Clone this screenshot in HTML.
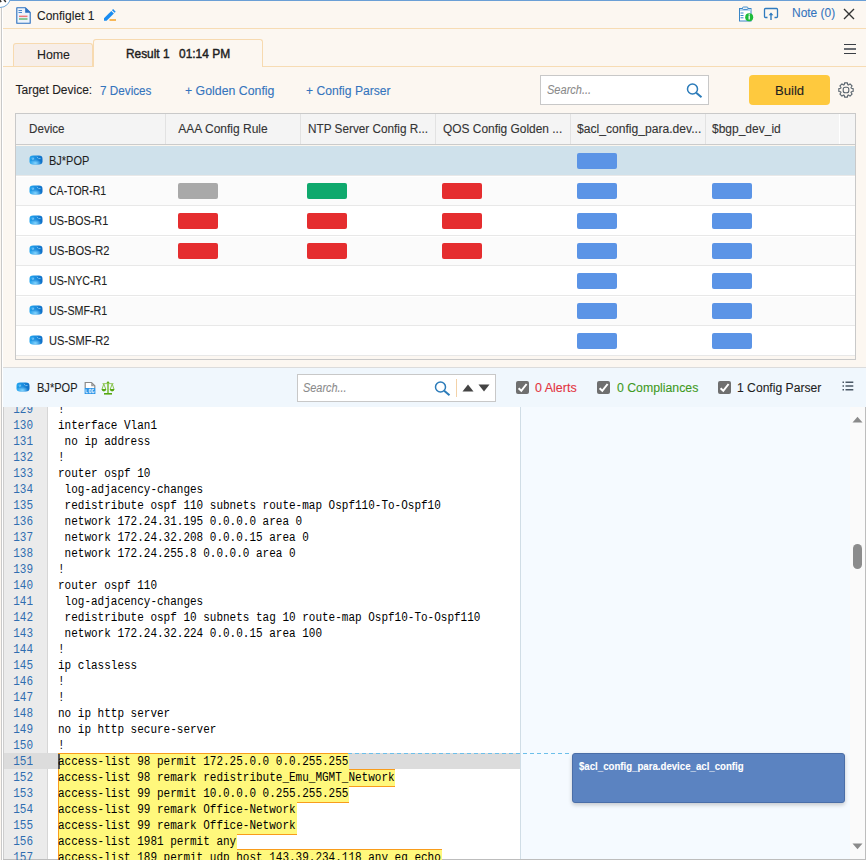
<!DOCTYPE html>
<html><head><meta charset="utf-8">
<style>
*{box-sizing:border-box;margin:0;padding:0}
html,body{width:866px;height:860px;overflow:hidden;background:#fcf7f1;font-family:"Liberation Sans",sans-serif;color:#222;position:relative}
.a{position:absolute}
.t{position:absolute;white-space:nowrap;line-height:1;transform-origin:0 0;-webkit-text-stroke:0.1px currentColor}
.link{color:#3a76b8}
.th{font-size:12px;color:#333}
.td{font-size:12px;color:#222}
.cell{position:absolute;height:16px;width:40px;border-radius:2px}
.g{background:#a9a9a9}.gr{background:#0fa96d}.r{background:#e52d2f}.b{background:#5b94e6}
.code{position:absolute;font-family:"Liberation Mono",monospace;font-size:11px;line-height:16px;white-space:pre}
</style></head><body>
<svg width="0" height="0" style="position:absolute">
<defs>
<linearGradient id="rg" x1="0" x2="1" y1="0" y2="0"><stop offset="0" stop-color="#22a6f0"/><stop offset="0.45" stop-color="#1a8ee0"/><stop offset="1" stop-color="#0e6ec6"/></linearGradient>
<radialGradient id="rg2" cx="0.45" cy="0.85" r="0.45"><stop offset="0" stop-color="#86d6ff" stop-opacity="1"/><stop offset="1" stop-color="#86d6ff" stop-opacity="0"/></radialGradient>

<symbol id="mag" viewBox="0 0 17 15"><circle cx="6.5" cy="6" r="5" fill="none" stroke="#2b7bb9" stroke-width="1.5"/><path d="M10.2 9.7L15.5 14.2" stroke="#2b7bb9" stroke-width="2"/></symbol>
</defs></svg>
<!-- top border -->
<div class="a" style="left:0;top:0;width:866px;height:1px;background:#6a9fd6"></div>
<div class="a" style="left:1px;top:6px;width:1px;height:854px;background:#c9c9c9"></div>
<div class="a" style="left:2px;top:7px;width:1px;height:853px;background:#fff"></div>
<div class="a" style="left:-11.5px;top:-15.3px;width:22.8px;height:22.8px;border-radius:50%;background:#fff;border:1px solid #6fa6d8"></div>
<svg class="a" style="left:0;top:0" width="8" height="3" viewBox="0 0 8 3"><path d="M-1 -1L1.2 2M5.8 2L3.5 -1" stroke="#333" stroke-width="1.5"/></svg>

<!-- header -->
<svg class="a" style="left:16px;top:7px" width="15" height="17" viewBox="0 0 15 17">
<path d="M0.8 0.8H9.5L14.2 5.5V16.2H0.8Z" fill="#eef4fb" stroke="#2a6fc0" stroke-width="1.1" stroke-linejoin="round"/>
<path d="M9.2 0.8V5.8H14.2Z" fill="#2a6fc0"/>
<rect x="2.5" y="3" width="3.5" height="1" fill="#4a86cc"/><rect x="2.5" y="5" width="3.5" height="1" fill="#4a86cc"/>
<rect x="3" y="8.6" width="8.5" height="1.5" fill="#f07878"/><rect x="3" y="11.3" width="8.5" height="1.4" fill="#5cb870"/>
</svg>
<svg class="a" style="left:103px;top:8px" width="15" height="15" viewBox="0 0 15 15">
<path d="M1 12.8L1 10.2L8.3 2.9L10.9 5.5L3.6 12.8Z" fill="#1a8cf0"/>
<path d="M9 2.2L10.1 1.1L12.7 3.7L11.6 4.8Z" fill="#1a8cf0"/>
<rect x="6.5" y="11.2" width="6.5" height="1.6" fill="#f5a732"/>
</svg>
<svg class="a" style="left:738px;top:6px" width="17" height="16" viewBox="0 0 17 16">
<rect x="1.5" y="2.5" width="11.5" height="12.5" fill="#fff" stroke="#3a86c6" stroke-width="1"/>
<rect x="2" y="3" width="10.5" height="2" fill="#bcd8ef"/>
<rect x="4.5" y="1" width="5.5" height="2.5" rx="1" fill="#e8f1fa" stroke="#3a86c6" stroke-width="0.9"/>
<path d="M2.5 7H5.5M2.5 9.5H5.5M2.5 11.8H5.5" stroke="#3a86c6" stroke-width="1"/>
<circle cx="11.2" cy="11.2" r="4" fill="#1dbb3a"/>
<path d="M11.2 9.6V13.6" stroke="#fff" stroke-width="1.3"/><circle cx="11.2" cy="8.6" r="0.6" fill="#fff"/>
</svg>
<svg class="a" style="left:763px;top:7px" width="16" height="14" viewBox="0 0 16 14">
<path d="M4.5 10.5H2.5Q1.5 10.5 1.5 9.5V2.5Q1.5 1.5 2.5 1.5H13.5Q14.5 1.5 14.5 2.5V9.5Q14.5 10.5 13.5 10.5H11.5" fill="none" stroke="#2f7bbf" stroke-width="1.3"/>
<path d="M8 6.5V13" stroke="#2f7bbf" stroke-width="1.4"/><path d="M5.6 8.3L8 5.6L10.4 8.3Z" fill="#2f7bbf"/>
</svg>
<svg class="a" style="left:843px;top:8px" width="12" height="12" viewBox="0 0 12 12"><path d="M1 1L11 11M11 1L1 11" stroke="#333" stroke-width="1.4"/></svg>
<div class="a" style="left:3px;top:28px;width:863px;height:1px;background:#f7dcb4"></div>

<!-- tabs -->
<div class="a" style="left:3px;top:66px;width:863px;height:1px;background:#f7dcb4"></div>
<div class="a" style="left:13px;top:43px;width:80px;height:23px;background:#f7eee8;border:1px solid #f7dab0;border-bottom:none;border-radius:3px 3px 0 0"></div>
<div class="a" style="left:93px;top:39px;width:170px;height:28px;background:#fcf7f1;border:1px solid #f7dab0;border-bottom:none;border-radius:3px 3px 0 0"></div>
<div class="a" style="left:844px;top:44px;width:12px;height:1px;background:#3a3f45"></div>
<div class="a" style="left:844px;top:48px;width:12px;height:2px;background:#6a6e73"></div>
<div class="a" style="left:844px;top:53px;width:12px;height:1px;background:#3a3f45"></div>

<!-- toolbar -->
<div class="a" style="left:540px;top:75px;width:169px;height:30px;background:#fff;border:1px solid #c8c8c8"></div>
<svg class="a" style="left:686px;top:83px" width="17" height="15"><circle cx="6.5" cy="6" r="5" fill="none" stroke="#2b7bb9" stroke-width="1.5"/><path d="M10.2 9.7L15.5 14.2" stroke="#2b7bb9" stroke-width="2"/></svg>
<div class="a" style="left:749px;top:75px;width:81px;height:30px;background:#fec93e;border-radius:4px"></div>
<svg class="a" style="left:838px;top:82px" width="16" height="16" viewBox="0 0 16 16">
<path d="M6.24 2.68 L6.55 0.85 L9.45 0.85 L9.76 2.68 L10.51 3.00 L12.03 1.92 L14.08 3.97 L13.00 5.49 L13.32 6.24 L15.15 6.55 L15.15 9.45 L13.32 9.76 L13.00 10.51 L14.08 12.03 L12.03 14.08 L10.51 13.00 L9.76 13.32 L9.45 15.15 L6.55 15.15 L6.24 13.32 L5.49 13.00 L3.97 14.08 L1.92 12.03 L3.00 10.51 L2.68 9.76 L0.85 9.45 L0.85 6.55 L2.68 6.24 L3.00 5.49 L1.92 3.97 L3.97 1.92 L5.49 3.00Z" fill="none" stroke="#56616b" stroke-width="1.1" stroke-linejoin="round"/>
<rect x="5.2" y="5.2" width="5.6" height="5.6" rx="2" fill="none" stroke="#56616b" stroke-width="1.1"/>
</svg>

<!-- table -->
<div class="a" style="left:15px;top:113px;width:841px;height:247px;background:#fcf7f1;border:1px solid #c9c9c9"></div>
<div class="a" style="left:16px;top:114px;width:839px;height:30px;background:#f4f4f4"></div>
<div class="a" style="left:16px;top:144px;width:839px;height:1px;background:#cbcbcb"></div>
<div class="a" style="left:16px;top:145px;width:839px;height:1px;background:#fbf6ee"></div>
<div class="a" style="left:165px;top:114px;width:1px;height:30px;background:#e2e2e2"></div>
<div class="a" style="left:300px;top:114px;width:1px;height:30px;background:#e2e2e2"></div>
<div class="a" style="left:435px;top:114px;width:1px;height:30px;background:#e2e2e2"></div>
<div class="a" style="left:570px;top:114px;width:1px;height:30px;background:#e2e2e2"></div>
<div class="a" style="left:705px;top:114px;width:1px;height:30px;background:#e2e2e2"></div>
<div class="a" style="left:839px;top:114px;width:1px;height:30px;background:#fff"></div>
<div class="a" style="left:16px;top:146px;width:839px;height:29px;background:#cfe1eb"></div>
<div class="a" style="left:16px;top:175px;width:839px;height:1px;background:#e8e8e8"></div>
<svg class="a" style="left:29px;top:155.4px" width="14" height="10" viewBox="0 0 14 10"><rect x="0.5" y="0.6" width="13" height="8.9" rx="3.6" ry="3.2" fill="url(#rg)"/><rect x="0.5" y="0.6" width="13" height="8.9" rx="3.6" ry="3.2" fill="url(#rg2)"/><path d="M1 5.2Q7 6.6 13 5.2" stroke="#0d68bd" stroke-width="0.6" fill="none" opacity="0.35"/><path d="M3 3.2H4.8M3.6 4.6L4.6 4M8.1 2.3L8.8 2.9M9.8 3.6H11.2" stroke="#bfe6ff" stroke-width="0.7" stroke-linecap="round" opacity="0.85"/></svg>
<div class="cell b" style="left:577px;top:153px"></div>
<div class="a" style="left:16px;top:176px;width:839px;height:29px;background:#fbfbfb"></div>
<div class="a" style="left:16px;top:176px;width:839px;height:1px;background:#fff"></div>
<div class="a" style="left:16px;top:205px;width:839px;height:1px;background:#e8e8e8"></div>
<svg class="a" style="left:29px;top:185.4px" width="14" height="10" viewBox="0 0 14 10"><rect x="0.5" y="0.6" width="13" height="8.9" rx="3.6" ry="3.2" fill="url(#rg)"/><rect x="0.5" y="0.6" width="13" height="8.9" rx="3.6" ry="3.2" fill="url(#rg2)"/><path d="M1 5.2Q7 6.6 13 5.2" stroke="#0d68bd" stroke-width="0.6" fill="none" opacity="0.35"/><path d="M3 3.2H4.8M3.6 4.6L4.6 4M8.1 2.3L8.8 2.9M9.8 3.6H11.2" stroke="#bfe6ff" stroke-width="0.7" stroke-linecap="round" opacity="0.85"/></svg>
<div class="cell g" style="left:178px;top:183px"></div>
<div class="cell gr" style="left:307px;top:183px"></div>
<div class="cell r" style="left:442px;top:183px"></div>
<div class="cell b" style="left:577px;top:183px"></div>
<div class="cell b" style="left:712px;top:183px"></div>
<div class="a" style="left:16px;top:206px;width:839px;height:29px;background:#fff"></div>
<div class="a" style="left:16px;top:206px;width:839px;height:1px;background:#fff"></div>
<div class="a" style="left:16px;top:235px;width:839px;height:1px;background:#e8e8e8"></div>
<svg class="a" style="left:29px;top:215.4px" width="14" height="10" viewBox="0 0 14 10"><rect x="0.5" y="0.6" width="13" height="8.9" rx="3.6" ry="3.2" fill="url(#rg)"/><rect x="0.5" y="0.6" width="13" height="8.9" rx="3.6" ry="3.2" fill="url(#rg2)"/><path d="M1 5.2Q7 6.6 13 5.2" stroke="#0d68bd" stroke-width="0.6" fill="none" opacity="0.35"/><path d="M3 3.2H4.8M3.6 4.6L4.6 4M8.1 2.3L8.8 2.9M9.8 3.6H11.2" stroke="#bfe6ff" stroke-width="0.7" stroke-linecap="round" opacity="0.85"/></svg>
<div class="cell r" style="left:178px;top:213px"></div>
<div class="cell r" style="left:307px;top:213px"></div>
<div class="cell r" style="left:442px;top:213px"></div>
<div class="cell b" style="left:577px;top:213px"></div>
<div class="cell b" style="left:712px;top:213px"></div>
<div class="a" style="left:16px;top:236px;width:839px;height:29px;background:#fbfbfb"></div>
<div class="a" style="left:16px;top:236px;width:839px;height:1px;background:#fff"></div>
<div class="a" style="left:16px;top:265px;width:839px;height:1px;background:#e8e8e8"></div>
<svg class="a" style="left:29px;top:245.4px" width="14" height="10" viewBox="0 0 14 10"><rect x="0.5" y="0.6" width="13" height="8.9" rx="3.6" ry="3.2" fill="url(#rg)"/><rect x="0.5" y="0.6" width="13" height="8.9" rx="3.6" ry="3.2" fill="url(#rg2)"/><path d="M1 5.2Q7 6.6 13 5.2" stroke="#0d68bd" stroke-width="0.6" fill="none" opacity="0.35"/><path d="M3 3.2H4.8M3.6 4.6L4.6 4M8.1 2.3L8.8 2.9M9.8 3.6H11.2" stroke="#bfe6ff" stroke-width="0.7" stroke-linecap="round" opacity="0.85"/></svg>
<div class="cell r" style="left:178px;top:243px"></div>
<div class="cell r" style="left:307px;top:243px"></div>
<div class="cell r" style="left:442px;top:243px"></div>
<div class="cell b" style="left:577px;top:243px"></div>
<div class="cell b" style="left:712px;top:243px"></div>
<div class="a" style="left:16px;top:266px;width:839px;height:29px;background:#fff"></div>
<div class="a" style="left:16px;top:266px;width:839px;height:1px;background:#fff"></div>
<div class="a" style="left:16px;top:295px;width:839px;height:1px;background:#e8e8e8"></div>
<svg class="a" style="left:29px;top:275.4px" width="14" height="10" viewBox="0 0 14 10"><rect x="0.5" y="0.6" width="13" height="8.9" rx="3.6" ry="3.2" fill="url(#rg)"/><rect x="0.5" y="0.6" width="13" height="8.9" rx="3.6" ry="3.2" fill="url(#rg2)"/><path d="M1 5.2Q7 6.6 13 5.2" stroke="#0d68bd" stroke-width="0.6" fill="none" opacity="0.35"/><path d="M3 3.2H4.8M3.6 4.6L4.6 4M8.1 2.3L8.8 2.9M9.8 3.6H11.2" stroke="#bfe6ff" stroke-width="0.7" stroke-linecap="round" opacity="0.85"/></svg>
<div class="cell b" style="left:577px;top:273px"></div>
<div class="cell b" style="left:712px;top:273px"></div>
<div class="a" style="left:16px;top:296px;width:839px;height:29px;background:#fbfbfb"></div>
<div class="a" style="left:16px;top:296px;width:839px;height:1px;background:#fff"></div>
<div class="a" style="left:16px;top:325px;width:839px;height:1px;background:#e8e8e8"></div>
<svg class="a" style="left:29px;top:305.4px" width="14" height="10" viewBox="0 0 14 10"><rect x="0.5" y="0.6" width="13" height="8.9" rx="3.6" ry="3.2" fill="url(#rg)"/><rect x="0.5" y="0.6" width="13" height="8.9" rx="3.6" ry="3.2" fill="url(#rg2)"/><path d="M1 5.2Q7 6.6 13 5.2" stroke="#0d68bd" stroke-width="0.6" fill="none" opacity="0.35"/><path d="M3 3.2H4.8M3.6 4.6L4.6 4M8.1 2.3L8.8 2.9M9.8 3.6H11.2" stroke="#bfe6ff" stroke-width="0.7" stroke-linecap="round" opacity="0.85"/></svg>
<div class="cell b" style="left:577px;top:303px"></div>
<div class="cell b" style="left:712px;top:303px"></div>
<div class="a" style="left:16px;top:326px;width:839px;height:29px;background:#fff"></div>
<div class="a" style="left:16px;top:326px;width:839px;height:1px;background:#fff"></div>
<div class="a" style="left:16px;top:355px;width:839px;height:1px;background:#e8e8e8"></div>
<svg class="a" style="left:29px;top:335.4px" width="14" height="10" viewBox="0 0 14 10"><rect x="0.5" y="0.6" width="13" height="8.9" rx="3.6" ry="3.2" fill="url(#rg)"/><rect x="0.5" y="0.6" width="13" height="8.9" rx="3.6" ry="3.2" fill="url(#rg2)"/><path d="M1 5.2Q7 6.6 13 5.2" stroke="#0d68bd" stroke-width="0.6" fill="none" opacity="0.35"/><path d="M3 3.2H4.8M3.6 4.6L4.6 4M8.1 2.3L8.8 2.9M9.8 3.6H11.2" stroke="#bfe6ff" stroke-width="0.7" stroke-linecap="round" opacity="0.85"/></svg>
<div class="cell b" style="left:577px;top:333px"></div>
<div class="cell b" style="left:712px;top:333px"></div>


<!-- bottom bar -->
<div class="a" style="left:3px;top:367px;width:863px;height:1px;background:#dcdcdc"></div>
<div class="a" style="left:3px;top:368px;width:863px;height:39px;background:#f0f7fd"></div>
<svg class="a" style="left:16px;top:382px" width="14" height="10" viewBox="0 0 14 10"><rect x="0.5" y="0.6" width="13" height="8.9" rx="3.6" ry="3.2" fill="url(#rg)"/><rect x="0.5" y="0.6" width="13" height="8.9" rx="3.6" ry="3.2" fill="url(#rg2)"/><path d="M1 5.2Q7 6.6 13 5.2" stroke="#0d68bd" stroke-width="0.6" fill="none" opacity="0.35"/><path d="M3 3.2H4.8M3.6 4.6L4.6 4M8.1 2.3L8.8 2.9M9.8 3.6H11.2" stroke="#bfe6ff" stroke-width="0.7" stroke-linecap="round" opacity="0.85"/></svg>
<svg class="a" style="left:84px;top:381px" width="12" height="14" viewBox="0 0 12 14">
<path d="M1.2 7V1.5H7.5L10.8 4.8V7" fill="#fff" stroke="#8a8a8a" stroke-width="1.2"/>
<path d="M7.2 1.8V5.2H10.5Z" fill="#9a9a9a"/>
<rect x="0.6" y="7" width="10.8" height="6" fill="#2d96e8"/>
<path d="M2 8.3V11.7H3.8M5.3 8.3H7V11.7H5.3ZM10 8.3H8.3V11.7H10V10.2" fill="none" stroke="#e6f3ff" stroke-width="0.9"/>
</svg>
<svg class="a" style="left:101px;top:381px" width="14" height="14" viewBox="0 0 14 14">
<circle cx="7" cy="1.8" r="1.3" fill="#5fab18"/>
<path d="M7 2V12.5" stroke="#7dbd3c" stroke-width="1.6"/>
<path d="M1.5 2.6H12.5" stroke="#8cc650" stroke-width="0.9"/>
<path d="M2.8 3L0.9 8.5M2.8 3L4.9 8.5M11.2 3L9.1 8.5M11.2 3L13.1 8.5" stroke="#7dbd3c" stroke-width="0.9"/>
<path d="M0.6 8.1H5.2A2.3 2.3 0 0 1 0.6 8.1Z" fill="#56a812"/>
<path d="M8.8 8.1H13.4A2.3 2.3 0 0 1 8.8 8.1Z" fill="#56a812"/>
<rect x="3" y="12" width="8" height="1.6" fill="#56a812"/>
</svg>
<div class="a" style="left:297px;top:374px;width:199px;height:28px;background:#fff;border:1px solid #c8c8c8"></div>
<svg class="a" style="left:434px;top:381px" width="17" height="15"><circle cx="6.5" cy="6" r="5" fill="none" stroke="#2b7bb9" stroke-width="1.5"/><path d="M10.2 9.7L15.5 14.2" stroke="#2b7bb9" stroke-width="2"/></svg>
<svg class="a" style="left:434px;top:381px" width="0" height="0"></svg>
<div class="a" style="left:456px;top:379px;width:1px;height:18px;background:#f3d2a8"></div>
<svg class="a" style="left:462px;top:384px" width="12" height="8" viewBox="0 0 12 8"><path d="M0.5 7.5L6 0.5L11.5 7.5Z" fill="#444"/></svg>
<svg class="a" style="left:478px;top:384px" width="12" height="8" viewBox="0 0 12 8"><path d="M0.5 0.5L6 7.5L11.5 0.5Z" fill="#444"/></svg>
<svg class="a" style="left:516px;top:381px" width="13" height="13" viewBox="0 0 13 13"><rect width="13" height="13" rx="2" fill="#6f6f6f"/><path d="M2.6 7.2L5.3 9.8L10.6 3" fill="none" stroke="#fff" stroke-width="2"/></svg>
<svg class="a" style="left:597px;top:381px" width="13" height="13" viewBox="0 0 13 13"><rect width="13" height="13" rx="2" fill="#6f6f6f"/><path d="M2.6 7.2L5.3 9.8L10.6 3" fill="none" stroke="#fff" stroke-width="2"/></svg>
<svg class="a" style="left:718px;top:381px" width="13" height="13" viewBox="0 0 13 13"><rect width="13" height="13" rx="2" fill="#6f6f6f"/><path d="M2.6 7.2L5.3 9.8L10.6 3" fill="none" stroke="#fff" stroke-width="2"/></svg>
<svg class="a" style="left:842px;top:381px" width="12" height="10" viewBox="0 0 12 10"><path d="M0.5 1.3H2M0.5 5H2M0.5 8.7H2" stroke="#4a5866" stroke-width="1.5"/><path d="M3.5 1.3H11.3M3.5 5H11.3M3.5 8.7H11.3" stroke="#4a5866" stroke-width="1.5"/></svg>

<!-- code area -->
<div class="a" style="left:3px;top:407px;width:863px;height:453px;background:#fff;border-right:1px solid #bdbdbd;border-bottom:1px solid #bdbdbd"></div>
<div class="a" style="left:3px;top:407px;width:45px;height:452px;background:#ebebeb;border-left:1px solid #cdcdcd;border-right:1px solid #d6d6d6"></div>
<div class="a" style="left:520px;top:407px;width:345px;height:452px;background:#f5faff;border-left:1px solid #d0dde6"></div>
<div class="a" style="left:850px;top:407px;width:15px;height:452px;background:#fafafa"></div>
<svg class="a" style="left:852px;top:416px" width="11" height="7" viewBox="0 0 11 7"><path d="M0.5 6.5L5.5 0.8L10.5 6.5Z" fill="#8a8a8a"/></svg>
<div class="a" style="left:853px;top:544px;width:9px;height:25px;border-radius:4.5px;background:#8c8c8c"></div>
<svg class="a" style="left:852px;top:843px" width="11" height="7" viewBox="0 0 11 7"><path d="M0.5 0.5L5.5 6.2L10.5 0.5Z" fill="#8a8a8a"/></svg>
<div class="a" style="left:0;top:407px;width:866px;height:453px;overflow:hidden">
<div class="a" style="left:0;top:-407px;width:866px;height:860px">
<div class="a" style="left:4px;top:753px;width:516px;height:16px;background:#dcdcdc"></div>
<div class="a" style="left:58px;top:753px;width:291px;height:18px;background:#f89c1c"></div>
<div class="a" style="left:58px;top:769px;width:337px;height:18px;background:#f89c1c"></div>
<div class="a" style="left:58px;top:785px;width:291px;height:18px;background:#f89c1c"></div>
<div class="a" style="left:58px;top:801px;width:239px;height:18px;background:#f89c1c"></div>
<div class="a" style="left:58px;top:817px;width:239px;height:18px;background:#f89c1c"></div>
<div class="a" style="left:58px;top:833px;width:179px;height:18px;background:#f89c1c"></div>
<div class="a" style="left:58px;top:849px;width:384px;height:18px;background:#f89c1c"></div>
<div class="a" style="left:59px;top:754px;width:290px;height:16px;background:#fff87c"></div>
<div class="a" style="left:59px;top:770px;width:336px;height:16px;background:#fff87c"></div>
<div class="a" style="left:59px;top:786px;width:290px;height:16px;background:#fff87c"></div>
<div class="a" style="left:59px;top:802px;width:238px;height:16px;background:#fff87c"></div>
<div class="a" style="left:59px;top:818px;width:238px;height:16px;background:#fff87c"></div>
<div class="a" style="left:59px;top:834px;width:178px;height:16px;background:#fff87c"></div>
<div class="a" style="left:59px;top:850px;width:383px;height:16px;background:#fff87c"></div>
<div class="a" style="left:58px;top:754px;width:2px;height:15px;background:#555"></div>
<div class="code" style="left:4px;top:402px;width:29px;text-align:right;color:#2f6db0;font-size:12px;transform:scaleX(0.9165);transform-origin:100% 0">129
130
131
132
133
134
135
136
137
138
139
140
141
142
143
144
145
146
147
148
149
150
151
152
153
154
155
156
157</div>
<div class="code" style="left:58px;top:402px;color:#000;font-size:12px;transform:scaleX(0.9165);transform-origin:0 0">!
interface Vlan1
 no ip address
!
router ospf 10
 log-adjacency-changes
 redistribute ospf 110 subnets route-map Ospf110-To-Ospf10
 network 172.24.31.195 0.0.0.0 area 0
 network 172.24.32.208 0.0.0.15 area 0
 network 172.24.255.8 0.0.0.0 area 0
!
router ospf 110
 log-adjacency-changes
 redistribute ospf 10 subnets tag 10 route-map Ospf10-To-Ospf110
 network 172.24.32.224 0.0.0.15 area 100
!
ip classless
!
!
no ip http server
no ip http secure-server
!
access-list 98 permit 172.25.0.0 0.0.255.255
access-list 98 remark redistribute_Emu_MGMT_Network
access-list 99 permit 10.0.0.0 0.255.255.255
access-list 99 remark Office-Network
access-list 99 remark Office-Network
access-list 1981 permit any
access-list 189 permit udp host 143.39.234.118 any eq echo</div>

</div></div>
<!-- acl box -->
<svg class="a" style="left:348px;top:753px" width="224" height="1"><path d="M0 0.5H224" stroke="#6cbfea" stroke-width="1" stroke-dasharray="4 3"/></svg>
<div class="a" style="left:572px;top:753px;width:273px;height:50px;background:#5b83c1;border:1px solid #4a6ea8;border-radius:3px;box-shadow:0 2px 4px rgba(0,0,0,0.2)"></div>
<div class="t" style="left:579px;top:761px;font-size:11px;font-weight:bold;color:#fff;transform:scaleX(0.877)">$acl_config_para.device_acl_config</div>
<div class="t" style="left:36.50px;top:8.80px;font-size:13px;transform:scaleX(0.924);color:#1e1e1e;">Configlet 1</div>
<div class="t" style="left:792.30px;top:6.20px;font-size:13px;transform:scaleX(0.920);color:#3474bd;">Note (0)</div>
<div class="t" style="left:36.70px;top:48.00px;font-size:13px;transform:scaleX(0.951);color:#1e1e1e;">Home</div>
<div class="t" style="left:125.50px;top:47.00px;font-size:13px;-webkit-text-stroke:0.45px currentColor;transform:scaleX(0.912);color:#1e1e1e;">Result 1</div>
<div class="t" style="left:179.30px;top:47.00px;font-size:13px;-webkit-text-stroke:0.45px currentColor;transform:scaleX(0.918);color:#1e1e1e;">01:14 PM</div>
<div class="t" style="left:15.50px;top:84.04px;font-size:12px;color:#1e1e1e;">Target Device:</div>
<div class="t" style="left:100.40px;top:85.24px;font-size:12px;transform:scaleX(0.977);color:#3474bd;">7 Devices</div>
<div class="t" style="left:184.60px;top:85.24px;font-size:12px;transform:scaleX(1.027);color:#3474bd;">+ Golden Config</div>
<div class="t" style="left:306.30px;top:85.24px;font-size:12px;transform:scaleX(1.011);color:#3474bd;">+ Config Parser</div>
<div class="t" style="left:547.00px;top:84.34px;font-size:12px;font-style:italic;transform:scaleX(0.920);color:#8a8a8a;">Search...</div>
<div class="t" style="left:774.90px;top:83.80px;font-size:13px;transform:scaleX(1.007);color:#1e1e1e;">Build</div>
<div class="t" style="left:28.70px;top:122.84px;font-size:12px;transform:scaleX(0.970);color:#333;">Device</div>
<div class="t" style="left:178.30px;top:122.84px;font-size:12px;color:#333;">AAA Config Rule</div>
<div class="t" style="left:307.80px;top:122.84px;font-size:12px;transform:scaleX(0.980);color:#333;">NTP Server Config R...</div>
<div class="t" style="left:442.80px;top:122.84px;font-size:12px;transform:scaleX(0.993);color:#333;">QOS Config Golden ...</div>
<div class="t" style="left:577.20px;top:122.84px;font-size:12px;transform:scaleX(1.009);color:#333;">$acl_config_para.dev...</div>
<div class="t" style="left:712.00px;top:122.84px;font-size:12px;color:#333;">$bgp_dev_id</div>
<div class="t" style="left:48.80px;top:154.64px;font-size:12px;transform:scaleX(0.914);color:#1e1e1e;">BJ*POP</div>
<div class="t" style="left:48.80px;top:184.64px;font-size:12px;transform:scaleX(0.879);color:#1e1e1e;">CA-TOR-R1</div>
<div class="t" style="left:48.80px;top:214.64px;font-size:12px;transform:scaleX(0.906);color:#1e1e1e;">US-BOS-R1</div>
<div class="t" style="left:48.80px;top:244.64px;font-size:12px;transform:scaleX(0.924);color:#1e1e1e;">US-BOS-R2</div>
<div class="t" style="left:48.80px;top:274.64px;font-size:12px;transform:scaleX(0.892);color:#1e1e1e;">US-NYC-R1</div>
<div class="t" style="left:48.80px;top:304.64px;font-size:12px;transform:scaleX(0.892);color:#1e1e1e;">US-SMF-R1</div>
<div class="t" style="left:48.80px;top:334.64px;font-size:12px;transform:scaleX(0.923);color:#1e1e1e;">US-SMF-R2</div>
<div class="t" style="left:37.40px;top:382.14px;font-size:12px;transform:scaleX(0.920);color:#1e1e1e;">BJ*POP</div>
<div class="t" style="left:303.30px;top:382.04px;font-size:12px;font-style:italic;transform:scaleX(0.909);color:#8a8a8a;">Search...</div>
<div class="t" style="left:535.00px;top:382.14px;font-size:12px;transform:scaleX(1.040);color:#e3343f;">0 Alerts</div>
<div class="t" style="left:616.50px;top:382.14px;font-size:12px;transform:scaleX(1.024);color:#3f9a23;">0 Compliances</div>
<div class="t" style="left:737.40px;top:382.14px;font-size:12px;transform:scaleX(1.011);color:#1e1e1e;">1 Config Parser</div>

</body></html>
